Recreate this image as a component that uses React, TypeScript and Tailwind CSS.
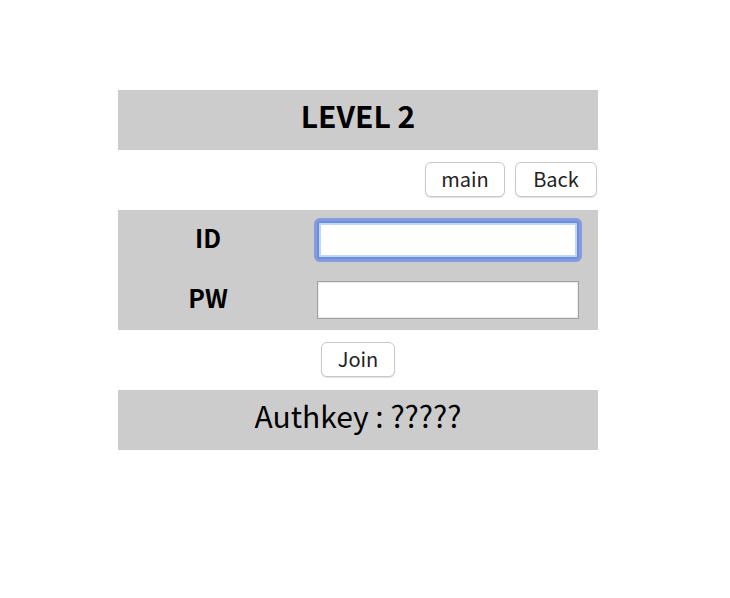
import React from "react";

const font = { fontFamily: '"Noto Sans CJK KR", "Noto Sans", sans-serif' };

function Btn({ children, className = "" }: { children: React.ReactNode; className?: string }) {
  return (
    <button
      className={
        "h-[35px] rounded-[6px] border border-[#c8c8c8] bg-white text-[20px] leading-none text-[#222] shadow-[0_1px_1px_rgba(0,0,0,0.12)] " +
        className
      }
    >
      {children}
    </button>
  );
}

export default function App() {
  return (
    <div className="min-h-[598px] w-[730px] bg-white pt-[90px]" style={font}>
      <div className="ml-[118px] flex w-[480px] flex-col">
        {/* Title */}
        <div className="flex h-[60px] items-center justify-center bg-[#cccccc] pb-[11px]">
          <h2 className="text-[30px] leading-none font-bold text-black">LEVEL 2</h2>
        </div>

        {/* Nav */}
        <div className="flex h-[60px] items-center justify-end gap-[10px] pr-[1px] pb-[2px]">
          <Btn className="w-[80px]">main</Btn>
          <Btn className="w-[82px]">Back</Btn>
        </div>

        {/* Form */}
        <div className="flex flex-col bg-[#cccccc]">
          <div className="flex h-[60px] items-center">
            <div className="w-[180px] pb-[6px] text-center text-[25px] leading-none font-bold text-black">ID</div>
            <div className="flex w-[300px] justify-center">
              <input
                autoFocus
                className="h-[38px] w-[262px] rounded-[3px] border-2 border-[#6a8ee8] bg-white shadow-[0_0_0_3px_rgba(110,140,225,0.75),inset_0_0_0_2px_#c4d3f6] outline-none"
              />
            </div>
          </div>
          <div className="flex h-[60px] items-center">
            <div className="w-[180px] pb-[6px] text-center text-[25px] leading-none font-bold text-black">PW</div>
            <div className="flex w-[300px] justify-center">
              <input
                type="password"
                className="h-[38px] w-[262px] border border-[#a0a0a0] bg-white shadow-[inset_0_0_0_1px_#ececec] outline-none"
              />
            </div>
          </div>
        </div>

        {/* Join */}
        <div className="flex h-[60px] items-center justify-center pb-[2px]">
          <Btn className="w-[74px] px-0">Join</Btn>
        </div>

        {/* Authkey */}
        <div className="flex h-[60px] items-center justify-center bg-[#cccccc] pb-[10px]">
          <span className="text-[30px] leading-none text-black">Authkey : ?????</span>
        </div>
      </div>
    </div>
  );
}
